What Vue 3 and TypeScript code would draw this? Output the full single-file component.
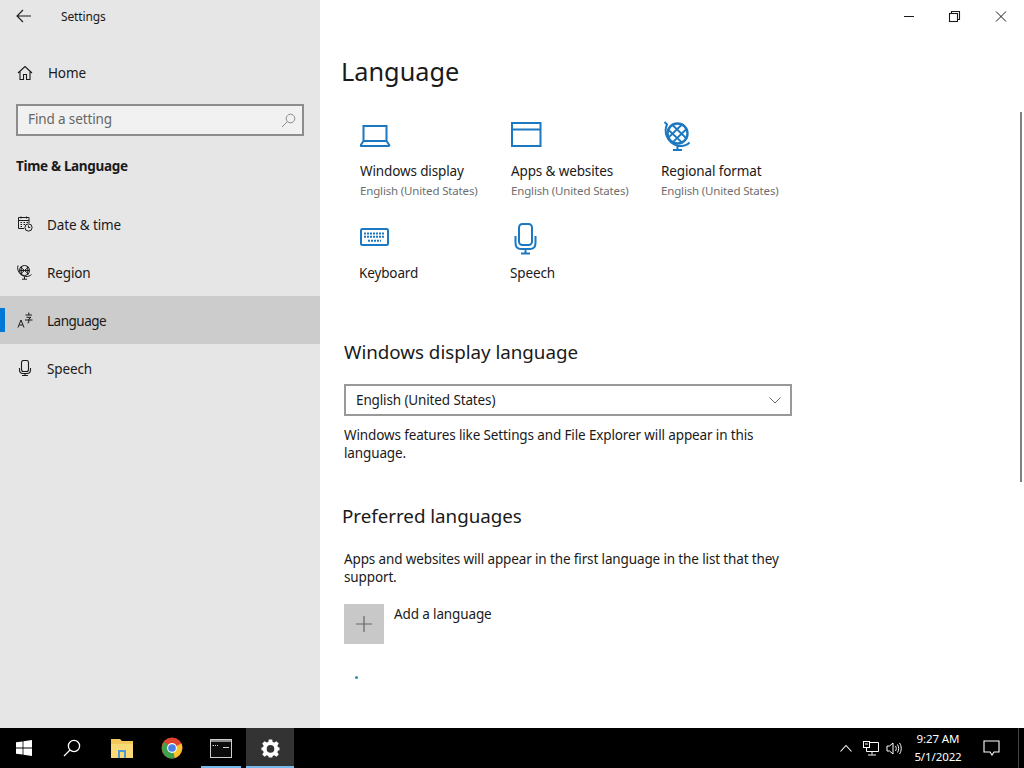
<script setup lang="ts">
const navItems = [
  { id: 'date', label: 'Date & time' },
  { id: 'region', label: 'Region' },
  { id: 'language', label: 'Language' },
  { id: 'speech', label: 'Speech' },
]
</script>

<template>
  <div class="screen">
    <div class="window">
      <aside class="sidebar">
        <div class="titlerow">
          <svg class="back" width="16" height="14" viewBox="0 0 16 14" fill="none" stroke="#1a1a1a" stroke-width="1.1">
            <path d="M1 7H15M7 1L1 7L7 13" />
          </svg>
          <span class="apptitle">Settings</span>
        </div>
        <div class="home">
          <svg width="16" height="16" viewBox="0 0 16 16" fill="none" stroke="#1a1a1a" stroke-width="1.1">
            <path d="M1 8L8 1.5L15 8M3 6.5V14.5H6.5V9.5H9.5V14.5H13V6.5" />
          </svg>
          <span>Home</span>
        </div>
        <div class="search">
          <span class="searchtext">Find a setting</span>
          <svg width="15" height="15" viewBox="0 0 15 15" fill="none" stroke="#8a8a8a" stroke-width="1">
            <circle cx="9.5" cy="5.5" r="4.3" />
            <path d="M6.4 8.6L1 14" />
          </svg>
        </div>
        <div class="section">Time &amp; Language</div>
        <nav class="nav">
          <div v-for="item in navItems" :key="item.id" class="navitem" :class="{ active: item.id === 'language' }">
            <svg v-if="item.id === 'date'" width="16" height="16" viewBox="0 0 16 16" fill="none" stroke="#1a1a1a" stroke-width="1">
              <path d="M7 12.5H1.5V1.5H12V7M1.5 4.5H12M4 0.5V2.5M9.5 0.5V2.5M3.5 6.5H5M6.5 6.5H8M9.5 6.5H11M3.5 8.5H5M6.5 8.5H8M3.5 10.5H5" />
              <circle cx="11.5" cy="11.5" r="3.6" />
              <path d="M11.5 9.5V11.5H13.2" />
            </svg>
            <svg v-else-if="item.id === 'region'" width="16" height="16" viewBox="0 0 16 16" fill="none" stroke="#1a1a1a" stroke-width="1">
              <circle cx="7.5" cy="6.5" r="5" />
              <path d="M3.5 3L11.5 10M11.5 3L3.5 10M5 2C3.8 5 3.8 8 5 11M10 2C11.2 5 11.2 8 10 11M2.5 6.5H12.5" />
              <path d="M1 1.5C-0.5 6 3 12 8.5 12.5C11 12.7 13 12 14.5 10.5M7.5 12.8V15M5 15.2H10" />
            </svg>
            <svg v-else-if="item.id === 'language'" width="16" height="16" viewBox="0 0 16 16" fill="none" stroke="#1a1a1a" stroke-width="1">
              <path d="M1 15.5L4 8L7 15.5M2.2 13H5.8" />
              <path d="M8.5 3H15M9.5 5.3H14L11.8 7V10.5L10.5 11M8 8H15.5M11.8 0.5V3" />
            </svg>
            <svg v-else width="16" height="16" viewBox="0 0 16 16" fill="none" stroke="#1a1a1a" stroke-width="1.1">
              <rect x="4.5" y="0.5" width="7" height="11" rx="2" />
              <path d="M2.5 8V10C2.5 12 4 13.5 6 13.5H10C12 13.5 13.5 12 13.5 10V8M8 13.5V15.5M5 15.5H11" />
            </svg>
            <span class="navlabel">{{ item.label }}</span>
          </div>
        </nav>
      </aside>

      <main class="content">
        <div class="caption">
          <svg width="46" height="46" viewBox="0 0 46 46" fill="none" stroke="#1a1a1a" stroke-width="1">
            <path d="M18 16.5H28" />
          </svg>
          <svg class="restore" width="46" height="46" viewBox="0 0 46 46" fill="none" stroke="#1a1a1a" stroke-width="1.1">
            <rect x="18.5" y="13.5" width="8" height="8" fill="#fff" />
            <path d="M20.5 13.5V11.5H28.5V19.5H26.5" />
          </svg>
          <svg width="46" height="46" viewBox="0 0 46 46" fill="none" stroke="#1a1a1a" stroke-width="1">
            <path d="M18 11.5L28 21.5M28 11.5L18 21.5" />
          </svg>
        </div>
        <div class="thumb"></div>

        <h1 class="pagetitle">Language</h1>

        <div class="quickgrid">
          <div class="quick">
            <svg class="qicon" width="32" height="32" viewBox="0 0 32 32" fill="none" stroke="#1c78c0" stroke-width="2">
              <path d="M3.5 5H26.5V20H3.5ZM3.5 20L0.8 24C0.5 24.6 0.8 25 1.3 25H28.7C29.2 25 29.5 24.6 29.2 24L26.5 20" />
            </svg>
            <div class="qlabel">Windows display</div>
            <div class="qsub">English (United States)</div>
          </div>
          <div class="quick">
            <svg class="qicon" width="32" height="32" viewBox="0 0 32 32" fill="none" stroke="#1c78c0" stroke-width="2">
              <path d="M1 2H29.5V25H1ZM1 8.5H29.5" />
            </svg>
            <div class="qlabel">Apps &amp; websites</div>
            <div class="qsub">English (United States)</div>
          </div>
          <div class="quick">
            <svg class="qicon globe" width="32" height="32" viewBox="0 0 32 32" fill="none" stroke="#1c78c0" stroke-width="2">
              <circle cx="14.5" cy="12.5" r="10" stroke-width="2.4" />
              <path d="M9.5 4L24 18M5 8.5L19.5 22M19.5 3L5 17M24 7.5L9.5 21.5" stroke-width="1.8" />
              <path d="M1.5 1L4 3.5C0.5 11 4 21 14 24.5C19 25.7 23.5 24.5 26.5 21.5M14.5 25V28.5M10 29H19" />
            </svg>
            <div class="qlabel">Regional format</div>
            <div class="qsub">English (United States)</div>
          </div>
          <div class="quick lower">
            <svg class="qicon kb" width="30" height="20" viewBox="0 0 30 20" fill="none" stroke="#1c78c0">
              <rect x="2" y="1" width="27" height="16" rx="1.5" stroke-width="2" />
              <path d="M5 5.5H26M5 8.8H26M9 12.8H22" stroke-width="2" stroke-dasharray="2 1" />
            </svg>
            <div class="qlabel">Keyboard</div>
          </div>
          <div class="quick lower">
            <svg class="qicon mic" width="24" height="32" viewBox="0 0 24 32" fill="none" stroke="#1c78c0" stroke-width="2">
              <rect x="5" y="1" width="13" height="21" rx="3.5" />
              <path d="M1.5 13V20C1.5 24 4 26 7 26H16C19 26 21.5 24 21.5 20V13M11.5 26V30M7 30.5H16" />
            </svg>
            <div class="qlabel">Speech</div>
          </div>
        </div>

        <h2 class="subhead display">Windows display language</h2>
        <div class="select">
          <span>English (United States)</span>
          <svg width="12" height="7" viewBox="0 0 12 7" fill="none" stroke="#666" stroke-width="1">
            <path d="M0.5 0.5L6 6L11.5 0.5" />
          </svg>
        </div>
        <p class="para first">Windows features like Settings and File Explorer will appear in this language.</p>

        <h2 class="subhead preferred">Preferred languages</h2>
        <p class="para second">Apps and websites will appear in the first language in the list that they support.</p>

        <div class="add">
          <div class="addbox">
            <svg width="18" height="18" viewBox="0 0 18 18" fill="none" stroke="#666" stroke-width="1.2">
              <path d="M9 1V17M1 9H17" />
            </svg>
          </div>
          <span>Add a language</span>
        </div>
        <div class="dot"></div>
      </main>
    </div>

    <footer class="taskbar">
      <div class="tb">
        <svg width="16" height="16" viewBox="0 0 16 16" fill="#fff">
          <path d="M0 2.3L6.6 1.4V7.6H0ZM7.4 1.3L16 0V7.6H7.4ZM0 8.4H6.6V14.6L0 13.7ZM7.4 8.4H16V16L7.4 14.7Z" />
        </svg>
      </div>
      <div class="tb">
        <svg width="18" height="18" viewBox="0 0 18 18" fill="none" stroke="#fff" stroke-width="1.3">
          <circle cx="11" cy="7" r="5.6" />
          <path d="M7 11L1 17" />
        </svg>
      </div>
      <div class="tb app-first">
        <svg width="22" height="19" viewBox="0 0 22 19">
          <path d="M0 0H9L11 2H22V19H0Z" fill="#f3c95c" />
          <path d="M0 5H22V19H0Z" fill="#fbd976" />
          <path d="M7 19V11H15V19H13V13H9V19Z" fill="#4a9ad8" />
        </svg>
      </div>
      <div class="tb app-next">
        <svg width="22" height="22" viewBox="0 0 24 24">
          <circle cx="12" cy="12" r="11.5" fill="#e0442f" />
          <path d="M12 12L22.5 7C24.5 13 22 20 15 23Z" fill="#f7c52b" />
          <path d="M12 12L15 23.2C8 25 2.5 20 1.5 15C0.8 11.5 1.5 8 3.5 5.5Z" fill="#3ca34c" />
          <circle cx="12" cy="12" r="5.4" fill="#fff" />
          <circle cx="12" cy="12" r="4.2" fill="#4a80e8" />
        </svg>
      </div>
      <div class="tb running">
        <svg width="22" height="19" viewBox="0 0 22 19" fill="none">
          <rect x="0.5" y="0.5" width="21" height="18" fill="#0c0c0c" stroke="#cfcfcf" />
          <rect x="1" y="1" width="20" height="2" fill="#8f8f8f" />
          <path d="M2.5 6.5H4M5 6.5H6M7 6.5H8M13 8.5H19" stroke="#cfcfcf" stroke-width="1.2" />
        </svg>
      </div>
      <div class="tb running current">
        <svg width="19" height="19" viewBox="0 0 20 20" fill="#fff">
          <path fill-rule="evenodd" d="M8.2 0.5H11.8L12.3 3.1L14 3.8L16.2 2.3L18.7 4.8L17.2 7L17.9 8.7L19.5 9V11.8L17.9 12.2L17.2 13.9L18.7 16.2L16.2 18.7L14 17.2L12.3 17.9L11.8 19.5H8.2L7.7 17.9L6 17.2L3.8 18.7L1.3 16.2L2.8 13.9L2.1 12.2L0.5 11.8V9L2.1 8.7L2.8 7L1.3 4.8L3.8 2.3L6 3.8L7.7 3.1ZM10 6.4A4 4 0 1 0 10 14.4A4 4 0 1 0 10 6.4Z" />
        </svg>
      </div>
      <div class="spacer"></div>
      <svg class="tray chevron" width="12" height="8" viewBox="0 0 12 8" fill="none" stroke="#fff" stroke-width="1.1">
        <path d="M0.5 7.5L6 1.5L11.5 7.5" />
      </svg>
      <svg class="tray net" width="16" height="15" viewBox="0 0 16 15" fill="none" stroke="#fff" stroke-width="1">
        <path d="M3.5 7V10.5H15.5V1.5H7M9 10.5V13.5M5 14H13" />
        <rect x="0.5" y="0.5" width="6" height="6" />
        <path d="M2 3H5" />
      </svg>
      <svg class="tray sound" width="17" height="15" viewBox="0 0 17 15" fill="none" stroke="#fff" stroke-width="1">
        <path d="M1 5V10H3.5L7 13V2L3.5 5ZM9.5 5C10.5 6.5 10.5 8.5 9.5 10M11.5 3.5C13 5.5 13 9.5 11.5 11.5M13.5 2C15.8 5 15.8 10 13.5 13" />
      </svg>
      <div class="clock">
        <span>9:27 AM</span>
        <span>5/1/2022</span>
      </div>
      <div class="notify">
        <svg width="17" height="16" viewBox="0 0 17 16" fill="none" stroke="#fff" stroke-width="1.1">
          <path d="M1 1H16V12H11L9 15L7 12H1Z" />
        </svg>
      </div>
    </footer>
  </div>
</template>

<style scoped>
.screen {
  width: 1024px;
  height: 768px;
  display: flex;
  flex-direction: column;
  overflow: hidden;
  font-family: "Noto Sans", "Open Sans", sans-serif;
  font-size: 13.5px;
  letter-spacing: -0.13px;
  color: #1a1a1a;
  background: #fff;
}
.window {
  flex: 1;
  display: flex;
  min-height: 0;
}
.sidebar {
  width: 320px;
  background: #e6e6e6;
  flex-shrink: 0;
}
.titlerow {
  height: 32px;
  display: flex;
  align-items: center;
  padding-left: 16px;
}
.back {
  margin-right: 29px;
}
.apptitle {
  font-size: 12px;
}
.home {
  height: 48px;
  margin-top: 17px;
  display: flex;
  align-items: center;
  gap: 15px;
  padding-left: 17px;
}
.search {
  margin: 7px 16px 0;
  height: 32px;
  border: 2px solid #8c8c8c;
  background: #f1f1f1;
  box-sizing: border-box;
  display: flex;
  align-items: center;
  justify-content: space-between;
  padding: 0 6px 0 10px;
  color: #666;
}
.searchtext {
  padding-bottom: 2px;
}
.section {
  margin: 19px 16px 0;
  font-weight: 700;
  letter-spacing: -0.33px;
  line-height: 22px;
}
.nav {
  margin-top: 23px;
}
.navitem {
  height: 48px;
  display: flex;
  align-items: center;
  gap: 14px;
  padding-left: 17px;
  position: relative;
}
.navlabel {
  padding-top: 2px;
}
.navitem.active {
  background: #cccccc;
}
.navitem.active .navlabel {
  letter-spacing: -0.5px;
}
.navitem.active::before {
  content: "";
  position: absolute;
  left: 0;
  top: 12px;
  width: 5px;
  height: 24px;
  background: #0078d7;
}
.content {
  flex: 1;
  position: relative;
  min-width: 0;
  padding-left: 22px;
}
.caption {
  position: absolute;
  top: 0;
  right: 0;
  display: flex;
}
.restore {
  margin-left: -1px;
  margin-right: 1px;
}
.thumb {
  position: absolute;
  right: 2px;
  top: 112px;
  width: 2px;
  height: 370px;
  background: #808080;
}
.pagetitle {
  margin: 0 0 0 -1px;
  padding-top: 53px;
  font-size: 25.3px;
  letter-spacing: 0;
  font-weight: 400;
  line-height: 36px;
}
.quickgrid {
  margin-top: 32px;
  margin-left: -22px;
  padding-left: 40px;
  display: grid;
  grid-template-columns: 151px 150px 150px;
  grid-auto-rows: 100px;
}
.qicon {
  display: block;
  height: 32px;
  margin-bottom: 7px;
}
.globe {
  margin-left: 2px;
}
.quick.lower {
  margin-left: -1px;
}
.kb {
  height: 20px;
  margin-top: 7px;
  margin-bottom: 14px;
}
.mic {
  margin-left: 4px;
  margin-top: 2px;
  margin-bottom: 7px;
}
.qlabel {
  line-height: 22px;
}
.qsub {
  font-size: 11.5px;
  letter-spacing: -0.16px;
  line-height: 18px;
  color: #6e6e6e;
}
.subhead {
  margin: 0;
  font-size: 18.8px;
  letter-spacing: -0.03px;
  font-weight: 400;
  line-height: 26px;
}
.subhead.display {
  margin-top: 18px;
  margin-left: 2px;
}
.select {
  margin: 19px 0 0 2px;
  width: 448px;
  height: 32px;
  box-sizing: border-box;
  border: 2px solid #999;
  display: flex;
  align-items: center;
  justify-content: space-between;
  padding: 0 9px 0 10px;
}
.para {
  margin: 0 0 0 2px;
  width: 448px;
  line-height: 18px;
}
.para.first {
  margin-top: 10px;
}
.subhead.preferred {
  margin-top: 41px;
}
.para.second {
  margin-top: 21px;
}
.add {
  margin: 18px 0 0 2px;
  display: flex;
  gap: 10px;
  line-height: 20px;
}
.addbox {
  width: 40px;
  height: 40px;
  background: #c8c8c8;
  display: flex;
  align-items: center;
  justify-content: center;
}
.dot {
  margin: 32px 0 0 13px;
  width: 3px;
  height: 3px;
  border-radius: 50%;
  background: #2f8f9f;
}
.taskbar {
  height: 40px;
  flex-shrink: 0;
  background: #000;
  display: flex;
  align-items: center;
  color: #fff;
}
.tb {
  width: 48px;
  height: 40px;
  display: flex;
  align-items: center;
  justify-content: center;
  box-sizing: border-box;
  flex-shrink: 0;
}
.app-first,
.app-next {
  margin-left: 2px;
}
.tb.running {
  border-bottom: 2px solid #76b9ed;
  padding-top: 2px;
  width: 40px;
  margin-left: 5px;
}
.tb.current {
  background: #333;
  width: 48px;
}
.spacer {
  flex: 1;
}
.tray {
  flex-shrink: 0;
}
.chevron {
  margin-right: 11px;
}
.net {
  margin-right: 7px;
}
.sound {
  margin-right: 9px;
}
.clock {
  width: 52px;
  display: flex;
  flex-direction: column;
  align-items: center;
  font-size: 11.5px;
  letter-spacing: -0.1px;
  line-height: 18px;
  white-space: nowrap;
}
.notify {
  width: 55px;
  margin-right: 5px;
  display: flex;
  justify-content: center;
  border-right: 1px solid #444;
  box-sizing: border-box;
  height: 40px;
  align-items: center;
}
</style>

<style>
html, body {
  margin: 0;
  padding: 0;
}
</style>
